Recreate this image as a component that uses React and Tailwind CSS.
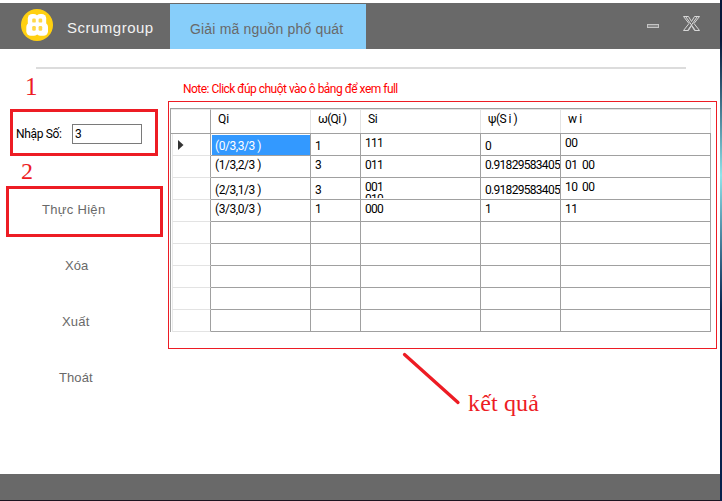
const rows = [
  ['(0/3,3/3 )', '1', '111', '0', '00'],
  ['(1/3,2/3 )', '3', '011', '0.91829583405', '01  00'],
  ['(2/3,1/3 )', '3', '001\n010', '0.91829583405', '10  00'],
  ['(3/3,0/3 )', '1', '000', '1', '11'],
  ['', '', '', '', ''],
  ['', '', '', '', ''],
  ['', '', '', '', ''],
  ['', '', '', '', ''],
  ['', '', '', '', ''],
];

const columns = ['Qi', 'ω(Qi )', 'Si', 'ψ(S i )', 'w i'];
const headerSpacing = [
  'tracking-[-0.1px]',
  'tracking-[-0.7px]',
  'tracking-[-0.5px]',
  'tracking-[-0.5px]',
  'tracking-[-0.4px]',
];
const cellSpacing = [
  'tracking-[-0.45px]',
  'tracking-[-0.7px]',
  'tracking-[-0.7px]',
  'tracking-[-0.7px]',
  'tracking-[-0.6px]',
];
const grid = 'grid grid-cols-[40px_100px_50px_120px_80px_150px]';

function isLow(row, col) {
  if (row === 0 || row === 2) return col === 0 || col === 1 || col === 3;
  return false;
}

function Logo() {
  return (
    <svg className="h-8 w-8" viewBox="0 0 32 32">
      <circle cx="16" cy="16" r="16" fill="#ffd010" />
      <g fill="#fff">
        <rect x="6.8" y="5" width="10.400" height="13" rx="4.500" />
        <rect x="14.800" y="5" width="10.400" height="13" rx="4.500" />
        <rect x="5.300" y="13.500" width="12" height="13.200" rx="4.500" />
        <rect x="15" y="13.500" width="12" height="13.200" rx="4.500" />
        <rect x="11" y="9" width="11" height="14" />
      </g>
      <g fill="#ffd84a">
        <rect x="11.200" y="9.600" width="3.600" height="4" rx="1.200" />
        <rect x="17.600" y="9.600" width="3.600" height="4" rx="1.200" />
        <rect x="11.200" y="17" width="3.600" height="4.800" rx="1.200" />
        <rect x="17.600" y="17" width="3.600" height="4.800" rx="1.200" />
      </g>
    </svg>
  );
}

function Header() {
  return (
    <header className="flex h-[46px] bg-[#696969]">
      <div className="flex w-[170px] items-start pl-[21px] pt-[6px]">
        <Logo />
        <span className="ml-[14px] mt-[9px] whitespace-nowrap text-[15px] leading-[20px] tracking-[0.5px] text-[#f2f2f2]">
          Scrumgroup
        </span>
      </div>
      <div className="mt-px w-[196px] whitespace-nowrap bg-[#87cefa] pl-[20px] pt-[15px] text-[14px] leading-[20px] tracking-[0.18px] text-[#696969]">
        Giải mã nguồn phổ quát
      </div>
      <div className="flex grow justify-end pr-[19px]">
        <svg className="h-[30px] w-[54px]" viewBox="0 0 54 30" fill="none" stroke="#d8d8d8">
          <rect x="0.5" y="21.500" width="11" height="3" fill="#8a8a8a" stroke="#c4c4c4" />
          <path d="M36.500 13.500h5l3 5 3-5h5M52.500 13.500l-5.500 7 5.500 7h-5l-3-5-3 5h-5l5.500-7-5.500-7M39 14l9 13M50 14l-9 13" />
        </svg>
      </div>
    </header>
  );
}

function Sidebar() {
  return (
    <aside className="w-[168px] shrink-0">
      <div className="h-[40px] pl-[25px] pt-[4px] font-['Liberation_Serif',serif] text-[25px] leading-[27px] text-[#ed1c24]">
        1
      </div>
      <div className="ml-[10px] flex h-[47px] w-[148px] items-center border-3 border-[#ed1c24] pl-[3px] font-['Roboto',sans-serif] text-[12px] tracking-[-0.35px] text-black">
        <span className="mt-[3px] w-[56px] whitespace-nowrap">Nhập Số:</span>
        <div className="mt-[3px] h-[20px] w-[70px] border border-[#7a7a7a] pl-[2px] leading-[18px]">3</div>
      </div>
      <div className="h-[30px] pl-[21px] pt-[2px] font-['Liberation_Serif',serif] text-[24px] leading-[27px] text-[#ed1c24]">
        2
      </div>
      <nav className="text-[13px] text-[#696969]">
        <div className="ml-[6px] h-[51px] w-[157px] border-3 border-[#ed1c24] pl-[33px] pt-[11px] leading-[20px] tracking-[0.3px]">
          Thực Hiện
        </div>
        <div className="mt-[19px] h-[56px] pl-[65px] leading-[20px]">Xóa</div>
        <div className="h-[56px] pl-[62px] leading-[20px] tracking-[0.2px]">Xuất</div>
        <div className="h-[56px] pl-[59px] leading-[20px] tracking-[0.1px]">Thoát</div>
      </nav>
    </aside>
  );
}

function ResultTable() {
  return (
    <div className="ml-px mt-[6px] w-[541px] border-l border-t border-[#a0a0a0] font-['Roboto',sans-serif] text-[12px] text-black">
      <div className={`${grid} h-[25px] border-b border-[#a0a0a0]`}>
        <div className="border-r border-t border-r-[#a0a0a0] border-t-[#e9e9e9]" />
        {columns.map((label, i) => (
          <div
            key={label}
            className={`whitespace-pre border-r border-t border-[#e3e3e3] pl-[7px] pt-[2px] leading-[14px] ${headerSpacing[i]}`}
          >
            {label}
          </div>
        ))}
      </div>
      {rows.map((row, r) => (
        <div key={r} className={`${grid} h-[22px]`}>
          <div className="ml-px flex items-center border-b border-l border-r border-b-[#e3e3e3] border-l-[#e9e9e9] border-r-[#a0a0a0] pl-[5px]">
            {r === 0 && (
              <svg className="h-[10px] w-[6px]" viewBox="0 0 6 10">
                <path d="M0 0L5.500 5 0 10z" fill="#333" />
              </svg>
            )}
          </div>
          {row.map((cell, c) => (
            <div
              key={c}
              className={`overflow-hidden border-b border-r border-[#a0a0a0] ${r === 0 && c === 0 ? 'pl-px pt-px' : ''}`}
            >
              <div
                className={`h-full max-h-[20px] overflow-hidden whitespace-pre leading-[12px] ${cellSpacing[c]} ${
                  r === 0 && c === 0 ? 'bg-[#3399ff] pl-[3px] text-white' : 'pl-[4px]'
                } ${r === 0 && c === 0 ? 'pt-[5px]' : isLow(r, c) ? 'pt-[6px]' : 'pt-[3px]'}`}
              >
                {cell}
              </div>
            </div>
          ))}
        </div>
      ))}
    </div>
  );
}

export default function App() {
  return (
    <div className="relative flex h-[501px] w-[722px] overflow-hidden bg-white font-['Liberation_Sans',Arial,sans-serif]">
      <div className="flex w-[720px] flex-col pt-[3px]">
        <Header />
        <div className="ml-[36px] mt-[18px] h-[2px] w-[650px] bg-[#dcdcdc]" />
        <div className="flex h-[405px]">
          <Sidebar />
          <main className="w-[549px]">
            <p className="h-[32px] whitespace-nowrap pl-[15px] pt-[12px] font-['Roboto',sans-serif] text-[12px] leading-[16px] tracking-[-0.52px] text-[#ff0000]">
              Note: Click đúp chuột vào ô bảng để xem full
            </p>
            <section className="h-[248px] w-[549px] border border-[#ed1c24]">
              <ResultTable />
            </section>
            <p className="ml-[300px] mt-[39px] font-['Liberation_Serif',serif] text-[24px] leading-[30px] tracking-[0.15px] text-[#ed1c24]">
              kết quả
            </p>
          </main>
        </div>
        <footer className="h-[26px] bg-[#696969]" />
        <div className="h-px bg-[#1c1420]" />
      </div>
      <div className="w-[2px] bg-linear-to-b from-[#06183a] from-8% via-[#8fe4ea] via-35% to-[#06204c] to-62%" />
      <svg className="absolute left-[400px] top-[350px] h-[56px] w-[62px]" viewBox="0 0 62 56">
        <path d="M4.500 4.500L58 52.500" stroke="#ed1c24" strokeWidth="3.300" strokeLinecap="round" />
      </svg>
    </div>
  );
}
